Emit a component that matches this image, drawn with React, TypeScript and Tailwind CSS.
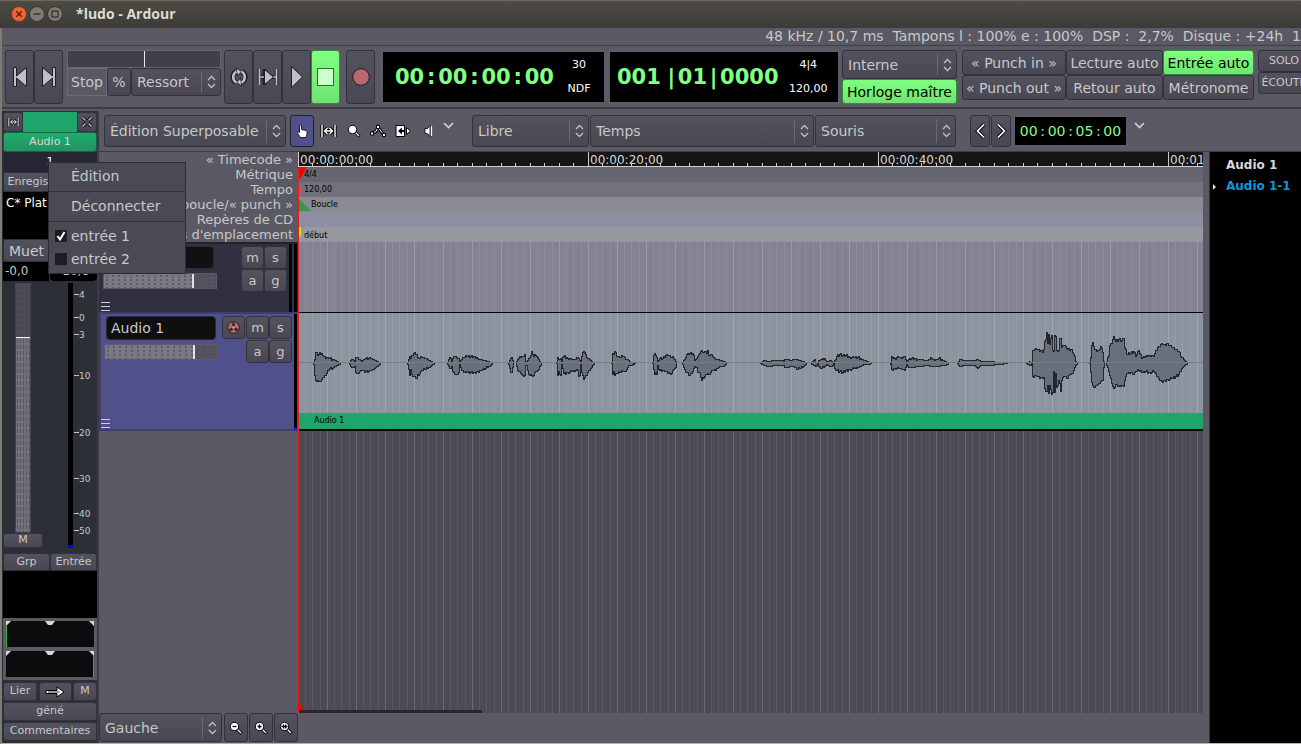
import type { ReactNode } from "react";
import clsx from "clsx";

const BTN =
  "flex shrink-0 items-center justify-center whitespace-nowrap rounded-[3px] border border-[#33323c] bg-linear-to-b from-[#53535f] to-[#484752] text-[#c8c8c8]";
const BTN_GREEN =
  "flex shrink-0 items-center justify-center whitespace-nowrap rounded-[3px] border border-[#2f8f3a] bg-linear-to-b from-[#80ff80] to-[#6fe46f] text-black";

// [x, peak above the axis, peak below the axis]
type Peak = [number, number, number];

const REGIONS: Peak[][] = [
  [[15,1,1],[16,4,12],[17,11,17],[18,11,18],[19,8,17],[20,9,18],[21,11,18],[22,9,18],[23,10,16],[24,8,14],[25,7,14],[27,5,12],[29,6,7],[31,5,5],[34,4,5],[36,3,3],[39,2,2],[42,0,0]],
  [[51,1,1],[53,4,4],[55,3,4],[56,1,3],[57,6,9],[59,6,10],[61,4,8],[63,2,7],[65,4,7],[67,5,8],[70,5,8],[72,5,7],[74,4,6],[77,3,4],[80,1,2],[82,0,0]],
  [[109,1,1],[111,7,12],[112,5,6],[113,8,11],[115,10,13],[117,9,15],[118,9,15],[119,6,11],[121,5,10],[123,6,7],[126,5,6],[129,4,5],[132,2,3],[134,1,1],[136,0,0]],
  [[149,1,1],[151,6,5],[152,5,5],[153,1,3],[154,5,8],[156,7,11],[158,6,11],[160,5,9],[161,1,1],[163,4,7],[165,6,9],[168,7,9],[172,7,9],[176,7,9],[179,5,8],[182,4,7],[185,3,5],[189,2,4],[192,1,2],[194,0,0]],
  [[210,1,1],[212,5,9],[213,6,9],[214,3,4],[215,0,0]],
  [[218,2,3],[220,5,8],[222,6,10],[224,7,12],[226,9,12],[227,2,2],[228,1,2],[230,5,11],[232,8,11],[233,12,12],[235,7,12],[237,8,8],[239,6,7],[241,2,3],[243,0,0]],
  [[258,0,0],[259,6,12],[260,4,8],[262,5,12],[263,1,1],[264,6,5],[265,7,10],[269,5,9],[273,4,8],[277,4,7],[279,6,7],[280,5,13],[281,3,12],[282,1,1],[283,7,9],[285,12,16],[287,9,12],[289,5,9],[292,3,5],[294,1,2],[296,0,0]],
  [[313,0,0],[314,10,11],[315,9,8],[316,12,12],[318,7,10],[321,6,9],[324,7,8],[326,6,8],[328,4,6],[330,3,2],[332,1,2],[337,0,0]],
  [[354,0,0],[355,8,6],[356,10,11],[357,8,9],[358,6,11],[359,1,2],[361,5,7],[364,5,7],[366,6,8],[368,9,8],[371,8,10],[373,6,10],[375,5,6],[377,2,4],[378,0,0]],
  [[384,1,1],[386,4,6],[388,9,9],[391,10,12],[394,10,8],[396,3,3],[398,5,4],[399,7,9],[401,10,9],[402,12,14],[403,13,17],[404,11,14],[406,12,13],[408,10,11],[409,13,10],[410,8,11],[412,9,9],[414,7,7],[416,5,6],[419,4,5],[421,3,3],[425,2,3],[427,1,1],[428,0,0]],
  [[462,0,0],[465,3,2],[470,2,3],[476,3,2],[483,3,2],[485,2,2],[486,4,4],[489,4,4],[492,3,3],[495,4,3],[498,4,6],[501,3,5],[504,2,4],[507,1,1],[508,0,0]],
  [[513,1,1],[516,4,2],[517,1,3],[519,0,0],[520,3,3],[523,4,5],[526,5,3],[528,1,1],[531,3,3],[533,2,3],[535,0,0]],
  [[536,3,5],[538,7,7],[541,9,8],[544,8,9],[547,8,7],[551,6,6],[555,6,5],[559,6,4],[563,4,2],[566,3,1],[570,1,1],[573,0,0]],
  [[592,0,1],[593,7,6],[596,5,5],[600,6,5],[603,5,6],[606,7,7],[608,1,1],[610,4,4],[613,5,4],[620,4,3],[628,3,2],[633,5,3],[636,3,3],[640,5,3],[643,4,2],[646,2,2],[650,0,0]],
  [[659,0,0],[661,4,3],[665,3,2],[670,3,2],[676,3,2],[679,4,5],[682,2,2],[690,2,2],[700,1,1],[709,0,0]],
  [[728,0,0],[731,2,2],[733,0,1],[734,13,13],[737,15,12],[740,14,13],[744,11,15],[745,14,14],[746,22,25],[747,24,28],[748,31,28],[749,20,22],[750,29,30],[751,19,22],[753,28,31],[754,13,29],[755,12,8],[756,28,29],[757,27,10],[758,13,24],[760,13,17],[761,25,20],[762,25,28],[763,16,17],[765,18,13],[767,17,13],[769,14,15],[771,13,11],[773,14,10],[775,9,7],[777,2,2],[779,0,0]],
  [[791,0,0],[792,6,9],[793,18,19],[794,21,22],[796,14,24],[798,12,22],[800,13,20],[802,17,18],[804,11,17],[805,2,4],[806,0,0]],
  [[808,1,2],[810,8,8],[811,18,12],[813,20,20],[815,27,25],[817,22,21],[820,24,23],[823,23,22],[825,25,23],[826,16,17],[828,9,10],[832,10,9],[835,12,11],[837,7,8],[840,13,7],[843,5,9],[847,7,8],[851,8,9],[855,7,8],[857,13,10],[860,17,15],[863,20,18],[866,19,17],[869,20,16],[873,16,15],[877,14,13],[880,12,11],[883,6,5],[886,3,2],[889,0,0]],
];

// one sample per pixel, with a little roughness so the outline looks like real peaks
function sample(peaks: Peak[]): Peak[] {
  const out: Peak[] = [];
  for (let i = 0; i < peaks.length - 1; i++) {
    const [x0, u0, d0] = peaks[i];
    const [x1, u1, d1] = peaks[i + 1];
    for (let x = x0; x < x1; x++) {
      const t = (x - x0) / (x1 - x0);
      const up = u0 + (u1 - u0) * t;
      const down = d0 + (d1 - d0) * t;
      const rough = x === x0 ? 0 : ((x * 7) % 3) - 1;
      out.push([x, Math.round(up > 4 ? up + rough : up), Math.round(down > 4 ? down - rough : down)]);
    }
  }
  out.push(peaks[peaks.length - 1]);
  return out;
}

function regionPath(peaks: Peak[]) {
  const samples = sample(peaks);
  const top = samples.map(([x, up]) => `L${x} ${50 - up}H${x + 1}`);
  const bottom = [...samples].reverse().map(([x, , down]) => `L${x + 1} ${50 + down}H${x}`);
  return `M${peaks[0][0]} 50${top.join("")}${bottom.join("")}Z`;
}

const METER_MARKS: [string, number][] = [
  ["4", 14],
  ["0", 37],
  ["3", 54],
  ["10", 95],
  ["20", 152],
  ["30", 198],
  ["40", 233],
  ["50", 250],
];

function Combo({ label, value, className }: { label: string; value: string; className: string }) {
  return (
    <div className={clsx("relative shrink-0", className)}>
      <select
        aria-label={label}
        className="h-full w-full appearance-none rounded-[3px] border border-[#33323c] bg-linear-to-b from-[#53535f] to-[#484752] pl-[5px] text-sm text-[#c8c8c8]"
      >
        <option>{value}</option>
      </select>
      <div className="pointer-events-none absolute inset-y-1 right-0 flex w-5 items-center justify-center border-l border-[#6b6b76]">
        <svg width="9" height="14" viewBox="0 0 9 14" fill="none" stroke="#c0c0c0" strokeWidth="1.3">
          <path d="M1 5L4.5 1.5L8 5M1 9L4.5 12.5L8 9" />
        </svg>
      </div>
    </div>
  );
}

function PixIcon({ children, w = 16, h = 16 }: { children: ReactNode; w?: number; h?: number }) {
  return (
    <svg width={w} height={h} viewBox={`0 0 ${w} ${h}`}>
      {children}
    </svg>
  );
}

function RangeIcon({ size = 17 }: { size?: number }) {
  return (
    <svg width={size} height={size - 3} viewBox="0 0 17 14" fill="none">
      <path d="M2 1V13M15 1V13M4.5 7H12.5M7.5 4L4.5 7L7.5 10M9.5 4L12.5 7L9.5 10" stroke="#000" strokeWidth="3.2" />
      <path d="M2 1V13M15 1V13M4.5 7H12.5M7.5 4L4.5 7L7.5 10M9.5 4L12.5 7L9.5 10" stroke="#fff" strokeWidth="1.4" />
    </svg>
  );
}

function Magnifier({ mark }: { mark?: string }) {
  return (
    <PixIcon w={14} h={14}>
      <path d="M8 8L12.5 12.5" stroke="#000" strokeWidth="3" />
      <path d="M8.5 8.5L12 12" stroke="#fff" strokeWidth="1.2" />
      <circle cx="5.5" cy="5.5" r="4.2" fill="#fff" stroke="#000" />
      {mark && <path d={mark} stroke="#000" strokeWidth="1.3" fill="none" />}
    </PixIcon>
  );
}

function DownChevron() {
  return (
    <svg width="11" height="7" viewBox="0 0 11 7" fill="none" stroke="#d0d0d0" strokeWidth="1.7">
      <path d="M1 1L5.5 5.5L10 1" />
    </svg>
  );
}

function TitleBar() {
  return (
    <header className="flex h-7 shrink-0 items-center border-t border-[#6a6861] bg-linear-to-b from-[#4c4b44] to-[#3c3b37] pb-px pl-[11px]">
      <div className="flex gap-[2px]">
        <button aria-label="Fermer" className="size-4">
          <PixIcon>
            <circle cx="8" cy="8" r="7.5" fill="#ee6337" stroke="#7c3a22" />
            <path d="M5.3 5.3L10.7 10.7M10.7 5.3L5.3 10.7" stroke="#4c2013" strokeWidth="1.4" />
          </PixIcon>
        </button>
        <button aria-label="Réduire" className="size-4">
          <PixIcon>
            <circle cx="8" cy="8" r="7.5" fill="#7d7b73" stroke="#34332f" />
            <path d="M4.5 8H11.5" stroke="#34332f" strokeWidth="1.4" />
          </PixIcon>
        </button>
        <button aria-label="Agrandir" className="size-4">
          <PixIcon>
            <circle cx="8" cy="8" r="7.5" fill="#7d7b73" stroke="#34332f" />
            <rect x="5" y="5" width="6" height="6" fill="none" stroke="#34332f" strokeWidth="1.3" />
          </PixIcon>
        </button>
      </div>
      <h1 className="ml-[13px] font-['Open_Sans',sans-serif] text-sm font-bold text-[#dfdbd2]">*ludo - Ardour</h1>
    </header>
  );
}

const TRANSPORT = "h-[54px] w-[29px]";

function Transport() {
  return (
    <section className="flex h-16 shrink-0 items-start overflow-hidden border-t border-b-2 border-t-[#3f3f48] border-b-[#3c3c42] pt-1 pl-[3px]">
      <button aria-label="Début" className={clsx(BTN, TRANSPORT)}>
        <PixIcon w={16} h={22}>
          <path d="M1.5 1.5V20.5H4.5V12L14.5 20.5V1.5L4.5 10V1.5Z" fill="#c0c0c4" stroke="#1d1d22" />
        </PixIcon>
      </button>
      <button aria-label="Fin" className={clsx(BTN, TRANSPORT)}>
        <PixIcon w={16} h={22}>
          <path d="M14.5 1.5V20.5H11.5V12L1.5 20.5V1.5L11.5 10V1.5Z" fill="#c0c0c4" stroke="#1d1d22" />
        </PixIcon>
      </button>
      <div className="ml-1 w-[154px] shrink-0">
        <div className="flex h-[18px] justify-center border border-[#65656f] bg-[#403f4a]">
          <div className="w-px bg-[#dcebf5]" />
        </div>
        <div className="flex h-7 text-sm">
          <button className="w-10 shrink-0 border border-[#6b6b76] bg-[#5a5a66] text-[#c8c8c8]">Stop</button>
          <button className={clsx(BTN, "w-6")}>%</button>
          <Combo label="Mode" value="Ressort" className="w-[90px]" />
        </div>
      </div>
      <div className="ml-[3px] flex shrink-0">
        <button aria-label="Boucle" className={clsx(BTN, TRANSPORT)}>
          <svg width="18" height="20" viewBox="0 0 18 20" fill="none">
            <path d="M6 15.5A6.2 6.2 0 0 1 6 4.500M12 4.500A6.200 6.200 0 0 1 12 15.500" stroke="#1d1d22" strokeWidth="4.500" />
            <path d="M6 0.800L11.500 4.500L7.500 9ZM12 19.200L6.500 15.500L10.500 11Z" fill="#c0c0c4" stroke="#1d1d22" strokeWidth=".9" />
            <path d="M6.500 15.500A6.200 6.200 0 0 1 6.500 4.500M11.500 4.500A6.200 6.200 0 0 1 11.500 15.500" stroke="#c0c0c4" strokeWidth="2.500" />
          </svg>
        </button>
        <button aria-label="Lire la sélection" className={clsx(BTN, TRANSPORT)}>
          <svg width="22" height="18" viewBox="0 0 22 18">
            <path d="M2.5 1V17M19.5 1V17M3 9H19M7.500 1V17" stroke="#1d1d22" strokeWidth="3.500" />
            <path d="M2.5 1V17M19.5 1V17M3 9H19" stroke="#c0c0c4" strokeWidth="1.700" />
            <path d="M7.500 1.500L16.500 9L7.500 16.500Z" fill="#c0c0c4" stroke="#1d1d22" />
          </svg>
        </button>
        <button aria-label="Lecture" className={clsx(BTN, TRANSPORT)}>
          <PixIcon w={14} h={24}>
            <path d="M1.5 1.5L12.5 12L1.5 22.5Z" fill="#c0c0c4" stroke="#1d1d22" />
          </PixIcon>
        </button>
        <button aria-label="Arrêt" className={clsx(BTN_GREEN, TRANSPORT)}>
          <PixIcon w={18} h={18}>
            <rect x=".5" y=".5" width="16" height="17" fill="#ccffcc" stroke="#2b6b2b" />
          </PixIcon>
        </button>
        <button aria-label="Enregistrer" className={clsx(BTN, TRANSPORT, "ml-[6px]")}>
          <PixIcon w={18} h={18}>
            <circle cx="9" cy="9" r="8.3" fill="#b8686e" stroke="#2a1d22" />
          </PixIcon>
        </button>
      </div>
      <div className="ml-[6px] flex h-[54px] w-[225px] shrink-0 items-center border-2 border-[#5c5c66] bg-black pl-3">
        <div className="flex pt-px text-[21px] font-bold text-[#80ff80]">
          <span>00</span>
          <span className="w-[14px] text-center">:</span>
          <span>00</span>
          <span className="w-[14px] text-center">:</span>
          <span>00</span>
          <span className="w-[14px] text-center">:</span>
          <span>00</span>
        </div>
        <div className="flex grow flex-col items-center gap-2 text-[11px] leading-4 text-white">
          <span>30</span>
          <span>NDF</span>
        </div>
      </div>
      <div className="ml-[2px] flex h-[54px] w-[232px] shrink-0 items-center border-2 border-[#5c5c66] bg-black pl-[7px]">
        <div className="flex pt-px text-[21px] font-bold text-[#80ff80]">
          <span>001</span>
          <span className="ml-1 w-[13px] text-center">|</span>
          <span>01</span>
          <span className="w-[13px] text-center">|</span>
          <span>0000</span>
        </div>
        <div className="flex grow flex-col items-center gap-2 text-[11px] leading-4 text-white">
          <span>4|4</span>
          <span>120,00</span>
        </div>
      </div>
      <div className="ml-[2px] w-[115px] shrink-0">
        <Combo label="Synchronisation" value="Interne" className="h-[29px]" />
        <button className={clsx(BTN_GREEN, "h-[25px] w-full text-sm")}>Horloge maître</button>
      </div>
      <div className="ml-[5px] grid shrink-0 grid-cols-[104px_97px_91px] grid-rows-[25px_25px] text-sm">
        <button className={BTN}>« Punch in »</button>
        <button className={BTN}>Lecture auto</button>
        <button className={BTN_GREEN}>Entrée auto</button>
        <button className={BTN}>« Punch out »</button>
        <button className={BTN}>Retour auto</button>
        <button className={BTN}>Métronome</button>
      </div>
      <div className="ml-1 grid w-[52px] shrink-0 grid-rows-[22px_22px] text-[11px]">
        <button className={BTN}>SOLO</button>
        <button className={BTN}>ÉCOUTE</button>
      </div>
    </section>
  );
}

const SMALL = "h-[19px] text-[11px]";

function MixerStrip() {
  return (
    <aside className="flex w-[97px] shrink-0 flex-col border-r-2 border-r-[#3c3c44] bg-[#2c2f36] pt-px pl-px">
      <div className="flex h-5 shrink-0">
        <button aria-label="Largeur" className={clsx(BTN, "w-5")}>
          <RangeIcon size={13} />
        </button>
        <div className="grow bg-[#1ea56b]" />
        <button aria-label="Masquer" className={clsx(BTN, "w-5")}>
          <PixIcon w={12} h={12}>
            <path d="M1.5 1.5L10.5 10.5M10.5 1.5L1.5 10.5" stroke="#111" strokeWidth="3.5" />
            <path d="M1.5 1.5L10.5 10.5M10.5 1.5L1.5 10.5" stroke="#bbb" strokeWidth="1.5" />
            <rect x="4" y="4" width="4" height="4" fill="#4d4c58" />
          </PixIcon>
        </button>
      </div>
      <button className="h-5 shrink-0 rounded-[3px] border border-[#18663f] bg-linear-to-b from-[#1fac70] to-[#22935f] text-[11px] text-[#d8d8d8]">
        Audio 1
      </button>
      <button className="h-5 shrink-0 rounded-[3px] bg-[#262634] text-[11px] text-white">1</button>
      <button className={clsx(BTN, "h-5 overflow-hidden text-[11px]")}>Enregistrement</button>
      <div className="h-[47px] shrink-0 overflow-hidden bg-black px-[3px] pt-[3px] text-xs whitespace-nowrap text-white">C* Plat</div>
      <div className="flex h-[23px] shrink-0">
        <button className={clsx(BTN, "w-[47px] text-sm")}>Muet</button>
        <button className={clsx(BTN, "w-[47px] text-sm")}>Solo</button>
      </div>
      <div className="flex h-[19px] shrink-0 justify-between text-xs leading-[18px] text-[#c8c8c8]">
        <div className="w-[46px] bg-black pl-[2px]">-0,0</div>
        <div className="w-[47px] rounded bg-black text-center">-10,8</div>
      </div>
      <div className="flex h-[272px] shrink-0 pt-[2px]">
        <div className="flex w-10 shrink-0 flex-col items-center">
          <div className="h-[250px] w-4 border border-[#44434e] bg-[#71707c] bg-[radial-gradient(#555461_1px,transparent_1px)] bg-size-[3px_6px]">
            <div className="h-[54px] border-b border-b-white bg-[#3f3e4a]/70" />
          </div>
          <button className={clsx(BTN, "h-[15px] w-full text-[11px]")}>M</button>
        </div>
        <svg width="54" height="270" className="ml-auto" fontSize="9" fill="#c8c8c8">
          <rect x="25" y="0" width="5" height="264" fill="#000" />
          <rect x="25" y="262" width="5" height="3" fill="#00f" />
          {METER_MARKS.map(([db, y]) => (
            <g key={db}>
              <path d={`M31 ${y - 2.5}h5`} stroke="#c8c8b8" />
              <text x="36" y={y + 1}>{db}</text>
            </g>
          ))}
        </svg>
      </div>
      <div className="flex h-[18px] shrink-0 text-[11px]">
        <button className={clsx(BTN, "w-[47px]")}>Grp</button>
        <button className={clsx(BTN, "w-[47px]")}>Entrée</button>
      </div>
      <div className="h-[47px] shrink-0 bg-black" />
      <div className="flex h-[62px] shrink-0 flex-col justify-center gap-1 bg-[#5a5a64] px-[3px]">
        {["left", "right"].map((side) => (
          <svg key={side} width="88" height="26" viewBox="0 0 88 26">
            <rect width="88" height="26" fill="#0c0c0e" />
            <path d="M0 0H5L0 5ZM88 0H83L88 5ZM39 0H49L46 4H42Z" fill="#d8d8d8" />
            <path d={side === "left" ? "M.5 5V26" : "M87.5 5V26"} stroke="#30b030" />
          </svg>
        ))}
      </div>
      <div className="mt-px flex h-5 shrink-0 justify-between gap-px pt-px text-[11px]">
        <button className={clsx(BTN, "w-[34px]")}>Lier</button>
        <button aria-label="Post" className={clsx(BTN, "w-[33px]")}>
          <svg width="20" height="12" viewBox="0 0 20 12">
            <path d="M1 4.5H12V1L19 6L12 11V7.5H1Z" fill="#fff" stroke="#000" />
            <path d="M3 6H15" stroke="#000" strokeWidth=".8" />
          </svg>
        </button>
        <button className={clsx(BTN, "w-6")}>M</button>
      </div>
      <button className={clsx(BTN, SMALL, "mt-px")}>géné</button>
      <button className={clsx(BTN, SMALL, "mt-px")}>Commentaires</button>
    </aside>
  );
}

function EditToolbar() {
  return (
    <div className="flex h-[41px] shrink-0 items-center border-b border-b-[#3c3c44] pl-[5px]">
      <Combo label="Mode d'édition" value="Édition Superposable" className="h-8 w-[182px]" />
      <div className="ml-1 flex shrink-0 items-center gap-1">
        <button aria-label="Objet" className="flex h-8 w-6 items-center justify-center rounded-[3px] border border-[#22222c] bg-[#50508a]">
          <svg width="12" height="14" viewBox="0 0 12 14">
            <path d="M3.5 1.5Q4.5 .5 5.5 1.5V5.5L10 6.5Q11.5 7 11 10L10 13.5H4.5L1 8.5Q1.5 7.2 3.5 8.5Z" fill="#fff" stroke="#000" strokeWidth=".8" />
          </svg>
        </button>
        <button aria-label="Intervalle" className="flex w-[21px] justify-center"><RangeIcon /></button>
        <button aria-label="Zoom" className="flex w-[21px] justify-center"><Magnifier /></button>
        <button aria-label="Gain" className="flex w-[21px] justify-center">
          <svg width="17" height="14" viewBox="0 0 17 14" fill="#fff" stroke="#000">
            <path d="M2 9L6 7.5L8 3L13 10L15 11" fill="none" strokeWidth="3" />
            <path d="M2 9L6 7.5L8 3L13 10L15 11" fill="none" stroke="#fff" />
            <path d="M.5 8h3v3h-3zM6.5 1.5h3v3h-3zM12.5 9.5h3v3h-3z" />
          </svg>
        </button>
        <button aria-label="Étirement" className="flex w-[21px] justify-center">
          <svg width="17" height="14" viewBox="0 0 17 14">
            <path d="M1 1.5H9.5V12.5H1Z" fill="#fff" stroke="#000" />
            <path d="M3 7L7 3.5V10.5ZM7 6H9V8H7Z" fill="#000" />
            <path d="M11.5 3.5L15.5 7L11.5 10.5Z" fill="#fff" stroke="#000" />
          </svg>
        </button>
        <button aria-label="Écoute" className="flex w-[21px] justify-center">
          <svg width="10" height="14" viewBox="0 0 10 14" fill="#fff" stroke="#000" strokeWidth=".8">
            <path d="M1 4.5H3.5L6 1.5V12.5L3.5 9.5H1Z" />
            <path d="M7.5 2V12" stroke="#fff" strokeWidth="1.2" />
          </svg>
        </button>
      </div>
      <button aria-label="Plus d'outils" className="mb-3 ml-1 shrink-0"><DownChevron /></button>
      <Combo label="Aimantation" value="Libre" className="ml-[18px] h-8 w-[117px]" />
      <Combo label="Unité de grille" value="Temps" className="ml-px h-8 w-[224px]" />
      <Combo label="Point de zoom" value="Souris" className="ml-px h-8 w-[141px]" />
      <button aria-label="Nudge arrière" className={clsx(BTN, "ml-[14px] h-8 w-5")}>
        <svg width="11" height="16" viewBox="0 0 11 16" fill="none">
          <path d="M9 1.5L2.5 8L9 14.5" stroke="#000" strokeWidth="3.5" />
          <path d="M9 1.5L2.5 8L9 14.5" stroke="#fff" strokeWidth="1.7" />
        </svg>
      </button>
      <button aria-label="Nudge avant" className={clsx(BTN, "ml-px h-8 w-5")}>
        <svg width="11" height="16" viewBox="0 0 11 16" fill="none">
          <path d="M2 1.5L8.5 8L2 14.5" stroke="#000" strokeWidth="3.5" />
          <path d="M2 1.5L8.5 8L2 14.5" stroke="#fff" strokeWidth="1.7" />
        </svg>
      </button>
      <div className="ml-[2px] flex h-8 w-[115px] shrink-0 items-center justify-center border-2 border-[#5c5c66] bg-black text-sm text-[#80ff80]">
        <span>00</span>
        <span className="w-[10px] text-center">:</span>
        <span>00</span>
        <span className="w-[10px] text-center">:</span>
        <span>05</span>
        <span className="w-[10px] text-center">:</span>
        <span>00</span>
      </div>
      <button aria-label="Plus" className="mb-3 ml-[6px] shrink-0"><DownChevron /></button>
    </div>
  );
}

function GainSlider() {
  return (
    <div className="h-4 w-[114px] shrink-0 border border-[#5b5a66] bg-[#797884] bg-[radial-gradient(#5d5c69_1px,transparent_1px)] bg-size-[6px_4px]">
      <div className="ml-auto h-full w-[24px] border-l-2 border-l-[#e0e0e0] bg-[#4b4a56]/80" />
    </div>
  );
}

function HeightGrip() {
  return (
    <svg width="10" height="11" viewBox="0 0 10 11" className="mt-auto" stroke="#d0d0d0">
      <path d="M0 1.5H9M0 5.5H9M0 9.5H9" />
    </svg>
  );
}

const SQ = "size-[23px] text-[13px]";

function TrackHeaders() {
  const rulers = ["« Timecode »", "Métrique", "Tempo", "Intervalles de boucle/« punch »", "Repères de CD", "Marqueurs d'emplacement"];
  return (
    <div className="flex w-[199px] shrink-0 flex-col">
      <div className="h-[90px] shrink-0 overflow-hidden text-right text-[13px] leading-[15px] text-[#c8c8c8]">
        {rulers.map((name) => (
          <div key={name} className="flex justify-end pr-[5px] whitespace-nowrap">{name}</div>
        ))}
      </div>
      <div className="flex h-[70px] shrink-0 border-t-2 border-[#22222a] bg-[#323040]">
        <div className="flex grow flex-col pt-[2px] pl-[2px]">
          <div className="flex pl-px">
            <input aria-label="Nom du bus" defaultValue="master" className="h-[23px] w-[112px] rounded-[4px] border border-[#2a2a30] bg-[#111] px-1 text-sm text-[#c8c8c8]" />
            <button className={clsx(BTN, SQ, "ml-auto")}>m</button>
            <button className={clsx(BTN, SQ)}>s</button>
          </div>
          <div className="flex items-center pl-[2px]">
            <GainSlider />
            <button className={clsx(BTN, SQ, "ml-auto")}>a</button>
            <button className={clsx(BTN, SQ)}>g</button>
          </div>
          <HeightGrip />
        </div>
        <div className="ml-[2px] flex w-[9px] gap-[2px]">
          <div className="w-[3px] bg-black" />
          <div className="w-[3px] bg-black" />
        </div>
      </div>
      <div className="flex h-[119px] shrink-0 border-2 border-r-0 border-[#3e3e6c] bg-[#50508a]">
        <div className="flex grow flex-col pt-[2px]">
          <div className="flex pl-[5px]">
            <input aria-label="Nom de la piste" defaultValue="Audio 1" className="h-6 w-[110px] rounded-[4px] border border-[#2a2a30] bg-[#0f0f0f] px-1 text-sm text-[#c8c8c8]" />
            <button aria-label="Armer" className={clsx(BTN, SQ, "ml-auto")}>
              <svg width="13" height="13" viewBox="0 0 13 13">
                <circle cx="6.5" cy="6.5" r="5.8" fill="#b8686e" stroke="#2a1d22" />
                <path d="M6.5 1.5V5M2.5 9.5L5.5 7.5M10.5 9.5L7.5 7.5" stroke="#3a2228" strokeWidth="2.5" />
                <circle cx="6.5" cy="6.5" r="1.2" fill="#c88" />
              </svg>
            </button>
            <button className={clsx(BTN, SQ, "ml-px")}>m</button>
            <button className={clsx(BTN, SQ)}>s</button>
          </div>
          <div className="flex items-center pl-[3px]">
            <GainSlider />
            <button className={clsx(BTN, SQ, "ml-auto")}>a</button>
            <button className={clsx(BTN, SQ)}>g</button>
          </div>
          <HeightGrip />
        </div>
        <div className="mr-px ml-[2px] flex w-[3px] flex-col justify-end border-b-2 border-b-[#00f] bg-black" />
      </div>
    </div>
  );
}

// bar and beat lines, one bar is 29px wide
const GRID =
  "bg-[linear-gradient(90deg,#ffffff2e_1px,transparent_1px,transparent_7px,#ffffff14_7px,#ffffff14_8px,transparent_8px,transparent_14px,#ffffff14_14px,#ffffff14_15px,transparent_15px,transparent_22px,#ffffff14_22px,#ffffff14_23px,transparent_23px)] bg-size-[29px_100%]";

function Canvas() {
  const times = ["00:00:00:00", "00:00:20:00", "00:00:40:00", "00:01:00:00"];
  return (
    <div className="relative flex min-w-0 grow flex-col overflow-hidden bg-[#4c4b55] text-[8px] text-black">
      <div className="flex h-[15px] shrink-0 border-b border-b-[#d0d0c8] bg-[#161616] bg-[linear-gradient(90deg,#d0d0c8_1px,transparent_1px,transparent_14px,#d0d0c8_14px,#d0d0c8_15px,transparent_15px)] bg-size-[29px_3px] bg-bottom-left bg-repeat-x text-xs leading-4 text-[#d8d8d8]">
        {times.map((t) => (
          <div key={t} className="w-[290px] shrink-0 border-l border-l-[#d0d0c8] pl-px">{t}</div>
        ))}
      </div>
      <div className="flex h-[15px] shrink-0 items-center bg-[#666672]">
        <svg width="6" height="15" className="overflow-visible"><path d="M0 0H9L3 11H0Z" fill="#f00" /></svg>4/4
      </div>
      <div className="flex h-[15px] shrink-0 items-center bg-[#72727c]">
        <svg width="6" height="15"><path d="M0 2L3 6V12H0Z" fill="#f04050" /></svg>120,00
      </div>
      <div className="flex h-[15px] shrink-0 items-center bg-[#8b8b95]">
        <svg width="13" height="15"><path d="M0 1L13 14H0Z" fill="#36964f" /></svg>Boucle
      </div>
      <div className="h-[15px] shrink-0 bg-[#8e8ea2]" />
      <div className="flex h-[15px] shrink-0 items-end bg-[#97979f]">
        <svg width="6" height="15"><path d="M0 0H3V8L1 11H0Z" fill="#d0f000" /></svg>début
      </div>
      <div className={clsx("h-[70px] shrink-0 bg-[#868292]", GRID)} />
      <div className="h-[101px] shrink-0 border-t border-t-black bg-[#8c959f]">
        <div className={clsx("h-full", GRID)}>
          <svg width="905" height="100" viewBox="0 0 905 100" shapeRendering="crispEdges">
            {REGIONS.map((peaks) => (
              <path key={peaks[0][0]} d={regionPath(peaks)} fill="#68707e" stroke="#24282c" />
            ))}
            <path d="M0 49.5H905" stroke="#7c7c7e" />
          </svg>
        </div>
      </div>
      <div className="flex h-[18px] shrink-0 items-center border-b-2 border-b-black bg-[#1ea56b] pl-4">Audio 1</div>
      <div className={clsx("grow", GRID)} />
      <div className="absolute bottom-0 left-0 h-[3px] w-[184px] bg-[#262530]" />
      <div className="absolute top-[15px] bottom-0 left-0 w-px bg-[#e02020]" />
      <svg width="7" height="8" className="absolute bottom-[3px] left-0"><path d="M0 0L7 8H0Z" fill="#f00" /></svg>
    </div>
  );
}

function PortCheck({ name, checked }: { name: string; checked?: boolean }) {
  return (
    <label className="relative flex h-[23px] items-center gap-1 pl-[6px]">
      <input type="checkbox" defaultChecked={checked} className="peer size-3 appearance-none bg-[#1c1e22]" />
      <svg viewBox="0 0 12 12" className="pointer-events-none absolute left-[6px] hidden size-3 peer-checked:block">
        <path d="M2.5 6L5 9.5L9.5 2" fill="none" stroke="#fff" strokeWidth="2" />
      </svg>
      {name}
    </label>
  );
}

function PortMenu() {
  return (
    <div role="menu" className="absolute top-[162px] left-[48px] w-[138px] border border-[#2c2c34] bg-[#4a4954] text-sm text-[#c8c8c8]">
      <button role="menuitem" className="block h-[29px] w-full border-b border-b-[#33323a] pb-[2px] pl-[22px] text-left">Édition</button>
      <button role="menuitem" className="block h-[30px] w-full border-b border-b-[#33323a] pb-[2px] pl-[22px] text-left">Déconnecter</button>
      <div className="flex flex-col pt-[2px] pb-[3px]">
        <PortCheck name="entrée 1" checked />
        <PortCheck name="entrée 2" />
      </div>
    </div>
  );
}

export default function App() {
  return (
    <div className="relative flex h-screen flex-col overflow-hidden bg-[#5a5964] font-['DejaVu_Sans',sans-serif]">
      <TitleBar />
      <div className="flex min-h-0 grow flex-col border-b border-l-2 border-b-[#b5b2aa] border-l-[#7d7b76]">
        <div className="flex h-[17px] shrink-0 items-center justify-end overflow-hidden pb-[2px] text-sm whitespace-pre text-[#c8c8c8]">
          {"48 kHz / 10,7 ms  Tampons l : 100% e : 100%  DSP :  2,7%  Disque : +24h  1"}
        </div>
        <Transport />
        <div className="flex min-h-0 grow pt-[2px]">
          <MixerStrip />
          <div className="flex min-w-0 grow flex-col">
            <EditToolbar />
            <div className="flex min-h-0 grow">
              <div className="flex min-w-0 grow flex-col">
                <div className="flex min-h-0 grow">
                  <TrackHeaders />
                  <Canvas />
                </div>
                <div className="flex h-[30px] shrink-0">
                  <Combo label="Foyer du zoom" value="Gauche" className="h-[29px] w-[123px]" />
                  <div className="ml-[2px] flex gap-px">
                    <button aria-label="Zoom arrière" className={clsx(BTN, "h-[29px] w-6")}><Magnifier mark="M3.5 5.5H7.5" /></button>
                    <button aria-label="Zoom avant" className={clsx(BTN, "h-[29px] w-6")}><Magnifier mark="M3.5 5.5H7.5M5.5 3.5V7.5" /></button>
                    <button aria-label="Zoom sur la session" className={clsx(BTN, "h-[29px] w-6")}><Magnifier mark="M4.5 3.5V7.5M6.7 3.5V7.5M2.5 5.5H8.5" /></button>
                  </div>
                </div>
              </div>
              <div className="w-[7px] shrink-0 border-r border-r-[#33333b]" />
              <ul className="w-[91px] shrink-0 bg-black pt-[3px] text-xs leading-[21px] font-bold whitespace-nowrap">
                <li className="pl-4 text-[#d8d8d8]">Audio 1</li>
                <li className="flex items-center text-[#0a98dc]">
                  <svg width="16" height="8"><path d="M3 1L6 4L3 7Z" fill="#ddd" /></svg>
                  Audio 1-1
                </li>
              </ul>
            </div>
          </div>
        </div>
      </div>
      <PortMenu />
    </div>
  );
}
